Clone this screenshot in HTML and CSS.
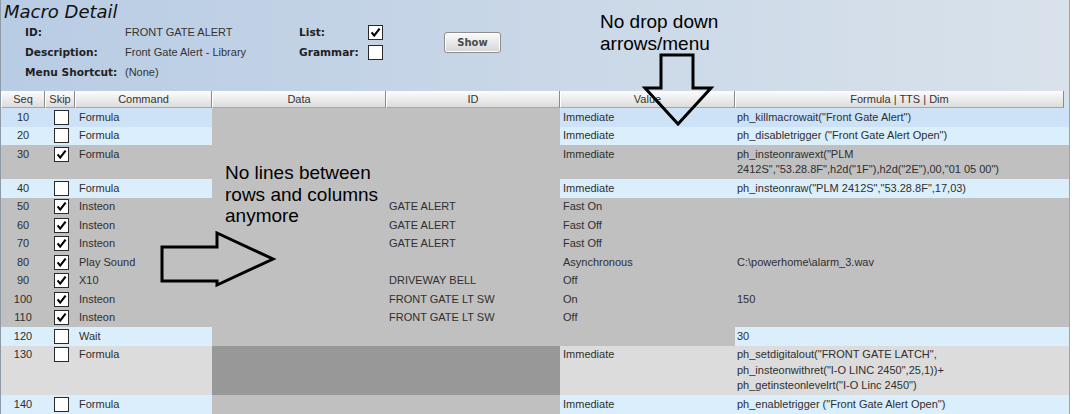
FILE: index.html
```html
<!DOCTYPE html>
<html>
<head>
<meta charset="utf-8">
<link rel="stylesheet" href="styles.css">
</head>
<body>
<div class="window">
  <div class="panel">
    <div class="title">Macro Detail</div>
    <div class="fields">
      <div class="lbl r1">ID:</div>
      <div class="val r1">FRONT GATE ALERT</div>
      <div class="lbl r2">Description:</div>
      <div class="val r2">Front Gate Alert - Library</div>
      <div class="lbl r3">Menu Shortcut:</div>
      <div class="val r3">(None)</div>
      <div class="lbl r1 c3">List:</div>
      <div class="r1 c4"><span class="cb on"><svg viewBox="0 0 13 13"><path d="M2.6 6.4 L5.2 9.6 L10.6 2.6"/></svg></span></div>
      <div class="lbl r2 c3">Grammar:</div>
      <div class="r2 c4"><span class="cb"></span></div>
      <button class="show">Show</button>
    </div>
  </div>

  <div class="thead">
    <div class="th">Seq</div>
    <div class="th">Skip</div>
    <div class="th">Command</div>
    <div class="th">Data</div>
    <div class="th">ID</div>
    <div class="th">Value</div>
    <div class="th">Formula | TTS | Dim</div>
  </div>

  <div class="tbody">
    <div class="row">
      <div class="td seq b1">10</div><div class="td skip b1"><span class="cb"></span></div><div class="td cmd b1">Formula</div>
      <div class="td g"></div><div class="td id g"></div>
      <div class="td v b1">Immediate</div><div class="td f b1">ph_killmacrowait("Front Gate Alert")</div>
    </div>
    <div class="row">
      <div class="td seq b2">20</div><div class="td skip b2"><span class="cb"></span></div><div class="td cmd b2">Formula</div>
      <div class="td g"></div><div class="td id g"></div>
      <div class="td v b2">Immediate</div><div class="td f b2">ph_disabletrigger ("Front Gate Alert Open")</div>
    </div>
    <div class="row">
      <div class="td seq g">30</div><div class="td skip g"><span class="cb on"><svg viewBox="0 0 13 13"><path d="M2.6 6.4 L5.2 9.6 L10.6 2.6"/></svg></span></div><div class="td cmd g">Formula</div>
      <div class="td g"></div><div class="td id g"></div>
      <div class="td v g">Immediate</div><div class="td f g">ph_insteonrawext("PLM<br>2412S","53.28.8F",h2d("1F"),h2d("2E"),00,"01 05 00")</div>
    </div>
    <div class="row">
      <div class="td seq b2">40</div><div class="td skip b2"><span class="cb"></span></div><div class="td cmd b2">Formula</div>
      <div class="td g"></div><div class="td id g"></div>
      <div class="td v b2">Immediate</div><div class="td f b2">ph_insteonraw("PLM 2412S","53.28.8F",17,03)</div>
    </div>
    <div class="row">
      <div class="td seq g">50</div><div class="td skip g"><span class="cb on"><svg viewBox="0 0 13 13"><path d="M2.6 6.4 L5.2 9.6 L10.6 2.6"/></svg></span></div><div class="td cmd g">Insteon</div>
      <div class="td g"></div><div class="td id g">GATE ALERT</div>
      <div class="td v g">Fast On</div><div class="td f g"></div>
    </div>
    <div class="row">
      <div class="td seq g">60</div><div class="td skip g"><span class="cb on"><svg viewBox="0 0 13 13"><path d="M2.6 6.4 L5.2 9.6 L10.6 2.6"/></svg></span></div><div class="td cmd g">Insteon</div>
      <div class="td g"></div><div class="td id g">GATE ALERT</div>
      <div class="td v g">Fast Off</div><div class="td f g"></div>
    </div>
    <div class="row">
      <div class="td seq g">70</div><div class="td skip g"><span class="cb on"><svg viewBox="0 0 13 13"><path d="M2.6 6.4 L5.2 9.6 L10.6 2.6"/></svg></span></div><div class="td cmd g">Insteon</div>
      <div class="td g"></div><div class="td id g">GATE ALERT</div>
      <div class="td v g">Fast Off</div><div class="td f g"></div>
    </div>
    <div class="row">
      <div class="td seq g">80</div><div class="td skip g"><span class="cb on"><svg viewBox="0 0 13 13"><path d="M2.6 6.4 L5.2 9.6 L10.6 2.6"/></svg></span></div><div class="td cmd g">Play Sound</div>
      <div class="td g"></div><div class="td id g"></div>
      <div class="td v g">Asynchronous</div><div class="td f g">C:\powerhome\alarm_3.wav</div>
    </div>
    <div class="row">
      <div class="td seq g">90</div><div class="td skip g"><span class="cb on"><svg viewBox="0 0 13 13"><path d="M2.6 6.4 L5.2 9.6 L10.6 2.6"/></svg></span></div><div class="td cmd g">X10</div>
      <div class="td g"></div><div class="td id g">DRIVEWAY BELL</div>
      <div class="td v g">Off</div><div class="td f g"></div>
    </div>
    <div class="row">
      <div class="td seq g">100</div><div class="td skip g"><span class="cb on"><svg viewBox="0 0 13 13"><path d="M2.6 6.4 L5.2 9.6 L10.6 2.6"/></svg></span></div><div class="td cmd g">Insteon</div>
      <div class="td g"></div><div class="td id g">FRONT GATE LT SW</div>
      <div class="td v g">On</div><div class="td f g">150</div>
    </div>
    <div class="row">
      <div class="td seq g">110</div><div class="td skip g"><span class="cb on"><svg viewBox="0 0 13 13"><path d="M2.6 6.4 L5.2 9.6 L10.6 2.6"/></svg></span></div><div class="td cmd g">Insteon</div>
      <div class="td g"></div><div class="td id g">FRONT GATE LT SW</div>
      <div class="td v g">Off</div><div class="td f g"></div>
    </div>
    <div class="row">
      <div class="td seq b2">120</div><div class="td skip b2"><span class="cb"></span></div><div class="td cmd b2">Wait</div>
      <div class="td g"></div><div class="td id g"></div>
      <div class="td v g"></div><div class="td f b2">30</div>
    </div>
    <div class="row">
      <div class="td seq lg">130</div><div class="td skip lg"><span class="cb"></span></div><div class="td cmd lg">Formula</div>
      <div class="td dg"></div><div class="td id dg"></div>
      <div class="td v lg">Immediate</div><div class="td f lg">ph_setdigitalout("FRONT GATE LATCH",<br>ph_insteonwithret("I-O LINC 2450",25,1))+<br>ph_getinsteonlevelrt("I-O Linc 2450")</div>
    </div>
    <div class="row">
      <div class="td seq b2">140</div><div class="td skip b2"><span class="cb"></span></div><div class="td cmd b2">Formula</div>
      <div class="td g"></div><div class="td id g"></div>
      <div class="td v b2">Immediate</div><div class="td f b2">ph_enabletrigger ("Front Gate Alert Open")</div>
    </div>
  </div>
</div>

<div class="note note-top">No drop down<br>arrows/menu</div>
<div class="note note-mid">No lines between<br>rows and columns<br>anymore</div>

<svg class="arrows" width="1074" height="414" viewBox="0 0 1074 414">
  <path d="M661 55 L693 55 L693 88 L711 88 L678 124 L645 88 L661 88 Z"/>
  <path d="M162 247 L217 247 L217 233 L273 259 L217 285 L217 281 L162 281 Z"/>
</svg>
</body>
</html>
```
FILE: styles.css
```css
html, body {
  margin: 0;
  padding: 0;
}
body {
  width: 1074px;
  height: 414px;
  overflow: hidden;
  background: #ffffff;
  position: relative;
  font-family: "Liberation Sans", Arial, sans-serif;
}
.window {
  width: 1070px;
  height: 414px;
  box-sizing: border-box;
  border-right: 1px solid #9aa4ae;
  border-left: 1px solid #8e9aa6;
  background: linear-gradient(to right, #b8cce4 0%, #c9d7e7 50%, #d9e2eb 100%);
  overflow: hidden;
}
.panel {
  height: 90px;
}
.title {
  font-family: "DejaVu Sans", sans-serif;
  font-style: italic;
  font-size: 18px;
  line-height: 20px;
  height: 20px;
  padding: 2px 0 0 3px;
  color: #111;
}
.fields {
  display: grid;
  grid-template-columns: 100px 174px 69px 15px 61px 57px;
  grid-template-rows: 20px 20px 20px;
  margin-left: 24px;
  font-size: 11px;
  color: #2e2e2e;
}
.lbl {
  font-family: "DejaVu Sans", sans-serif;
  font-weight: bold;
  font-size: 10.6px;
  line-height: 20px;
  color: #222;
  grid-column: 1;
}
.val {
  grid-column: 2;
  line-height: 20px;
  font-size: 11px;
  color: #333;
}
.r1 { grid-row: 1; }
.r2 { grid-row: 2; }
.r3 { grid-row: 3; }
.c3 { grid-column: 3; }
.c4 {
  grid-column: 4;
  display: flex;
  align-items: center;
}
.show {
  grid-column: 6;
  grid-row: 1 / 3;
  align-self: center;
  height: 21px;
  width: 57px;
  margin: 0;
  padding: 0;
  border: 1px solid #8d8d8d;
  border-radius: 3px;
  background: linear-gradient(#fbfbfb, #e6e6e6 55%, #d6d6d6);
  font-family: "DejaVu Sans", sans-serif;
  font-weight: bold;
  font-size: 10px;
  color: #4a4a4a;
  box-shadow: inset 0 0 0 1px #ffffff;
}
.cb {
  display: inline-block;
  width: 15px;
  height: 15px;
  box-sizing: border-box;
  border: 1px solid #2a2a2a;
  background: #ffffff;
  position: relative;
}
.cb svg {
  display: block;
  width: 13px;
  height: 13px;
}
.cb svg path {
  fill: none;
  stroke: #000;
  stroke-width: 2.1;
  stroke-linecap: butt;
  stroke-linejoin: miter;
}

.thead {
  display: grid;
  grid-template-columns: 44px 30px 137px 174px 174px 175px 329px;
  height: 18px;
  box-sizing: border-box;
  padding-top: 1px;
}
.th {
  height: 17px;
  box-sizing: border-box;
  border-right: 1px solid #8a8a8a;
  border-left: 1px solid #ffffff;
  border-bottom: 1px solid #a8a8a8;
  background: linear-gradient(#fdfdfd, #ececec 50%, #dcdcdc);
  text-align: center;
  font-size: 11px;
  line-height: 16px;
  color: #333;
}

.tbody {
  width: 1068px;
  background: #c0c0c0;
}
.row {
  display: grid;
  grid-template-columns: 44px 30px 137px 174px 174px 175px 334px;
}
.td {
  padding: 1.5px 0;
  line-height: 15.5px;
  font-size: 11px;
  color: #2f2f2f;
  white-space: nowrap;
}
.seq { text-align: center; }
.skip {
  padding-left: 9px;
  padding-top: 1.5px;
  box-sizing: border-box;
}
.skip .cb { vertical-align: top; }
.cmd { padding-left: 4px; }
.id { padding-left: 3px; }
.v { padding-left: 3px; }
.f { padding-left: 2px; }
.b1 { background: #cde2f7; }
.b2 { background: #dbeefc; }
.g { background: #c0c0c0; }
.lg { background: #dcdcdc; }
.dg { background: #989898; }

.note {
  position: absolute;
  font-family: "Liberation Sans", Arial, sans-serif;
  font-size: 19px;
  color: #000;
}
.note-top {
  left: 600px;
  top: 11px;
  line-height: 22px;
}
.note-mid {
  left: 225px;
  top: 162px;
  line-height: 21.5px;
}
.arrows {
  position: absolute;
  left: 0;
  top: 0;
}
.arrows path {
  fill: none;
  stroke: #000;
  stroke-width: 3;
  stroke-linejoin: miter;
}
```
